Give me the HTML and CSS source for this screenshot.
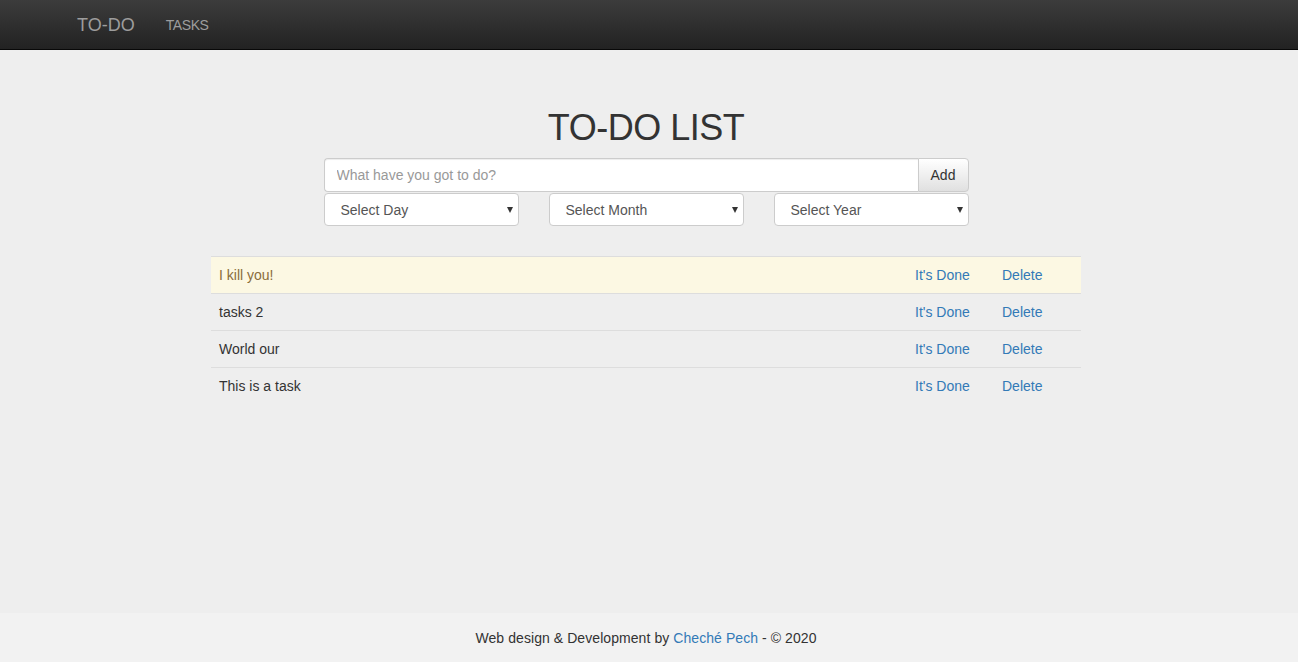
FILE: index.html
```html
<!DOCTYPE html>
<html>
<head>
<meta charset="utf-8">
<title>TO-DO</title>
<link rel="stylesheet" href="styles.css">
</head>
<body>
<nav class="navbar">
  <div class="nav-inner">
    <a class="brand" href="#">TO-DO</a>
    <a class="nav-link" href="#">TASKS</a>
  </div>
</nav>
<main class="main">
  <h1 class="title">TO-DO LIST</h1>
  <form class="todo-form">
    <div class="input-group">
      <input class="task-input" type="text" placeholder="What have you got to do?">
      <button class="add-btn" type="button">Add</button>
    </div>
    <div class="selects">
      <div class="select-wrap"><select class="date-select"><option>Select Day</option></select></div>
      <div class="select-wrap"><select class="date-select"><option>Select Month</option></select></div>
      <div class="select-wrap"><select class="date-select"><option>Select Year</option></select></div>
    </div>
  </form>
  <table class="tasks">
    <tbody>
      <tr class="warning">
        <td class="task-name">I kill you!</td>
        <td class="action"><a href="#">It's Done</a></td>
        <td class="action"><a href="#">Delete</a></td>
      </tr>
      <tr>
        <td class="task-name">tasks 2</td>
        <td class="action"><a href="#">It's Done</a></td>
        <td class="action"><a href="#">Delete</a></td>
      </tr>
      <tr>
        <td class="task-name">World our</td>
        <td class="action"><a href="#">It's Done</a></td>
        <td class="action"><a href="#">Delete</a></td>
      </tr>
      <tr>
        <td class="task-name">This is a task</td>
        <td class="action"><a href="#">It's Done</a></td>
        <td class="action"><a href="#">Delete</a></td>
      </tr>
    </tbody>
  </table>
</main>
<footer class="footer">
  Web design &amp; Development by <a href="#">Cheché Pech</a> - © 2020
</footer>
</body>
</html>
```
FILE: styles.css
```css
* { box-sizing: border-box; }
html, body { height: 100%; }
body {
  margin: 0;
  font-family: "Liberation Sans", Arial, Helvetica, sans-serif;
  font-size: 14px;
  line-height: 20px;
  color: #333;
  background: #eeeeee;
  display: flex;
  flex-direction: column;
}
a { color: #337ab7; text-decoration: none; }

.navbar {
  height: 50px;
  background: linear-gradient(to bottom, #3c3c3c 0%, #222222 100%);
  border-bottom: 1px solid #080808;
}
.nav-inner {
  width: 1170px;
  margin: 0 auto;
  padding: 0 15px;
  display: flex;
  align-items: center;
  height: 49px;
}
.brand {
  font-size: 18px;
  color: #9d9d9d;
  margin-left: -2px;
  line-height: 20px;
}
.nav-link {
  margin-left: 31px;
  font-size: 14px;
  letter-spacing: -0.4px;
  color: #9d9d9d;
}

.main {
  flex: 1;
  display: flex;
  flex-direction: column;
  align-items: center;
  padding-right: 6px;
}
.title {
  margin: 58px 0 10px;
  font-size: 36px;
  font-weight: 400;
  letter-spacing: -0.5px;
  line-height: 40px;
  color: #333;
}
.todo-form {
  width: 645px;
  display: flex;
  flex-direction: column;
  gap: 1px;
}
.input-group {
  display: flex;
  height: 34px;
}
.task-input {
  flex: 1;
  height: 34px;
  border: 1px solid #ccc;
  border-right: none;
  border-radius: 4px 0 0 4px;
  padding: 6px 12px;
  font: inherit;
  color: #555;
  background: #fff;
  box-shadow: inset 0 1px 1px rgba(0,0,0,.075);
}
.task-input::placeholder { color: #999; }
.add-btn {
  width: 51px;
  height: 34px;
  border: 1px solid #ccc;
  border-radius: 0 4px 4px 0;
  background: linear-gradient(to bottom, #fff 0%, #e0e0e0 100%);
  font: inherit;
  color: #333;
  padding: 0;
}
.selects {
  display: flex;
  gap: 30px;
}
.select-wrap {
  position: relative;
  width: 195px;
}
.select-wrap::after {
  content: "";
  position: absolute;
  right: 6px;
  top: 14px;
  border-left: 3px solid transparent;
  border-right: 3px solid transparent;
  border-top: 6px solid #333;
  pointer-events: none;
}
.date-select {
  appearance: none;
  -webkit-appearance: none;
  width: 100%;
  height: 33px;
  border: 1px solid #ccc;
  border-radius: 4px;
  background: #fff;
  font: inherit;
  color: #555;
  padding: 0 16px;
}

.tasks {
  margin-top: 30px;
  width: 870px;
  border-collapse: collapse;
}
.tasks td {
  padding: 8px;
  line-height: 20px;
  border-top: 1px solid #ddd;
  vertical-align: top;
}
.tasks .action { width: 87px; }
.tasks tr.warning td {
  background: #fcf8e3;
  color: #8a6d3b;
}
.tasks tr.warning td a { color: #337ab7; }

.footer {
  height: 49px;
  padding-right: 6px;
  background: #f2f2f2;
  text-align: center;
  line-height: 50px;
  letter-spacing: 0.07px;
  color: #333;
}
```
